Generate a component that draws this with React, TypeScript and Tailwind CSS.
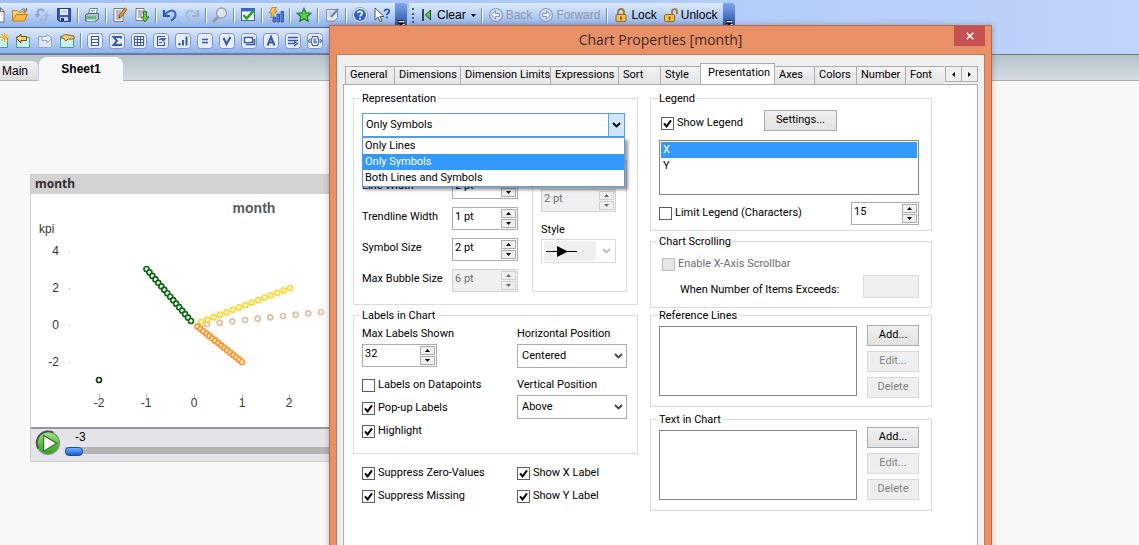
import { useState, type ReactNode } from "react";

/* ---------- toolbar icons (16 x 16) ---------- */

function Svg({ children }: { children: ReactNode }) {
  return (
    <svg viewBox="0 0 16 16" className="block size-4 shrink-0" aria-hidden="true">
      {children}
    </svg>
  );
}

const NewIcon = () => (
  <Svg>
    <path d="M4 1h8l3 3v11H4z" fill="#fff" stroke="#6b6f76" />
    <path d="M11.500 1v3.500H15" fill="#d9dde3" stroke="#6b6f76" />
  </Svg>
);
const OpenIcon = () => (
  <Svg>
    <path d="M.5 14V3.500h5L7 5h6v3" fill="#f3cf74" stroke="#b8862b" />
    <path d="M.5 14 4 7.500h11.500L12.500 14z" fill="#fbb648" stroke="#c07d1e" />
    <path d="M9 3.500c1-2 3.500-2 4.500-.5M14.500 1v3h-3" fill="none" stroke="#7a5a20" />
  </Svg>
);
const ReloadIcon = () => (
  <Svg>
    <path d="M3.500 9.500V6c0-4 5-5 6.500-1.500" fill="none" stroke="#8fa5c9" strokeWidth="2" />
    <path d="M.5 7h6l-3 4z" fill="#8fa5c9" />
    <path d="M12.500 7v3c0 4-5 5-6.500 1.500" fill="none" stroke="#a5b7d5" strokeWidth="2" />
    <path d="M9.500 9h6l-3-4z" fill="#a5b7d5" />
  </Svg>
);
const SaveIcon = () => (
  <Svg>
    <path d="M1.500 1.500h13v13h-11l-2-2z" fill="#3a57b5" stroke="#263b87" />
    <rect x="4" y="2" width="8" height="6" fill="#eef3fd" />
    <path d="M5 4h6M5 6h6" stroke="#a8b8de" />
    <rect x="4" y="10" width="8" height="4" fill="#c5cfe6" />
    <rect x="5" y="11" width="3" height="3" fill="#22357a" />
  </Svg>
);
const PrintIcon = () => (
  <Svg>
    <path d="M4.500 7 6 1.500h7.500L12 7z" fill="#fff" stroke="#6c8096" />
    <path d="M7 3.500h4M6.500 5h4" stroke="#8fa2b8" />
    <path d="M1.500 8 4 6.500h10.500V12l-2.500 2H1.500z" fill="#aebfd0" stroke="#53677d" />
    <path d="M2 10.500h10" stroke="#4bb56b" strokeWidth="2" />
    <path d="M3 13.500h8" stroke="#eef2f6" />
  </Svg>
);
const EditScriptIcon = () => (
  <Svg>
    <path d="M2 1.500h9v13H2z" fill="#fff" stroke="#747a84" />
    <path d="M4 4h5M4 6h5M4 8h4M4 10h3M4 12h5" stroke="#6f7783" />
    <path d="M14 1.500 7.500 10" stroke="#7a3f16" strokeWidth="3.200" />
    <path d="M14 1.500 7.800 9.600" stroke="#f0a43c" strokeWidth="1.800" />
    <path d="m6.500 11.500 .5-2 1.500 1z" fill="#222" />
  </Svg>
);
const ExportIcon = () => (
  <Svg>
    <path d="M2 1.500h8v12H2z" fill="#fff" stroke="#747a84" />
    <path d="M4 4h5M4 6h5M4 8h4M4 10h3" stroke="#6f7783" />
    <path d="M9.500 4.500h3V10h2.500l-4 5-4-5h2.500z" fill="#6cc24a" stroke="#2f7c22" />
  </Svg>
);
const UndoIcon = () => (
  <Svg>
    <path d="M2 3v6h6" fill="none" stroke="#2f56b5" strokeWidth="2.200" />
    <path d="M3 8C6 3 13 2 13.500 7c.2 3-1.500 5-4.500 6.500" fill="none" stroke="#3c67c6" strokeWidth="2.200" />
  </Svg>
);
const RedoIcon = () => (
  <Svg>
    <path d="M14 3v6H8" fill="none" stroke="#9aaecb" strokeWidth="2.200" />
    <path d="M13 8C10 3 3 2 2.500 7c-.2 3 1.500 5 4 6.500" fill="none" stroke="#a9bbd6" strokeWidth="2.200" />
  </Svg>
);
const SearchIcon = () => (
  <Svg>
    <path d="m6 10-5 5" stroke="#9d9696" strokeWidth="2.600" />
    <circle cx="9.500" cy="6" r="5" fill="#dbe4f3" stroke="#98a3b5" strokeWidth="1.400" />
    <path d="M6.800 5.500c.5-1.800 2-2.500 3.200-2.500" fill="none" stroke="#fff" />
  </Svg>
);
const SelectionsIcon = () => (
  <Svg>
    <rect x="1.500" y="1.500" width="13" height="12" fill="#fff" stroke="#4064b4" />
    <path d="M1 3h14" stroke="#3f66c4" strokeWidth="3" />
    <path d="m3.500 8 3 3.500 7-7.500" fill="none" stroke="#2ba32b" strokeWidth="2.600" />
  </Svg>
);
const QuickChartIcon = () => (
  <Svg>
    <path d="M5 10h2.500v5H5zM9 7h2.500v8H9zM13 4.500h2.500V15H13z" fill="#4a7fe0" stroke="#23499d" strokeWidth=".8" />
    <path d="M4 .5h4.500L6.500 4H9L2.500 11 4 6H1z" fill="#fbc63c" stroke="#b4761a" strokeWidth=".8" />
  </Svg>
);
const StarIcon = () => (
  <Svg>
    <path d="m8 1.500 2 4.300 4.800.5-3.500 3.200 1 4.700L8 11.900l-4.300 2.300 1-4.700L1.200 6.300 6 5.800z" fill="#59cf4b" stroke="#23802a" strokeWidth="1.200" />
  </Svg>
);
const NotesIcon = () => (
  <Svg>
    <path d="M2.500 2.500h11v8l-3 3.500h-8z" fill="#e3eaf6" stroke="#8592ab" />
    <path d="M4.500 5h5M4.500 7h4M4.500 9h2" stroke="#b1bccf" />
    <path d="m14 2-7 8" stroke="#7787a5" strokeWidth="2.400" />
  </Svg>
);
const HelpIcon = () => (
  <Svg>
    <circle cx="8" cy="8" r="7.500" fill="#f7faff" stroke="#7f93c0" strokeWidth=".8" />
    <circle cx="8" cy="8" r="6" fill="#2a5fd0" />
    <path d="M5.800 6.300C6 3.600 10.300 3.800 10.200 6.300 10.100 7.800 8 7.900 8 9.500M8 10.800v1.700" fill="none" stroke="#fff" strokeWidth="1.700" />
  </Svg>
);
const WhatsThisIcon = () => (
  <Svg>
    <path d="M1 1v12l3-3 2 4.500 2-1L6 9.500h4z" fill="#fff" stroke="#4b5666" />
    <path d="M10.500 4.500c.2-3 5-2.800 4.700 0C15 6.200 12.800 6.300 12.800 8M12.800 9.500v1.800" fill="none" stroke="#2a55b8" strokeWidth="1.800" />
  </Svg>
);

const SheetBase = ({ dim = false }: { dim?: boolean }) => (
  <path d="M1.500 3.500h5l1 1h7v10h-13z" fill={dim ? "#dbe4f3" : "#c9f0ea"} stroke={dim ? "#9aa7c0" : "#4b9c97"} />
);
const NewSheetIcon = () => (
  <Svg>
    <SheetBase />
    <path d="M11.500 0v9M7 4.500h9M8.300 1.300l6.400 6.400M14.700 1.300 8.300 7.700" stroke="#f2b61c" strokeWidth="1.200" />
  </Svg>
);
const PrevSheetIcon = () => (
  <Svg>
    <SheetBase />
    <path d="M6 1 1.500 5.500 6 10V7.500h5.500v-4H6z" fill="#fbd470" stroke="#6d4b10" />
  </Svg>
);
const NextSheetIcon = () => (
  <Svg>
    <SheetBase dim />
    <path d="m10 1 4.500 4.500L10 10V7.500H5v-4h5z" fill="#e9effa" stroke="#98a5c0" />
  </Svg>
);
const SheetPropsIcon = () => (
  <Svg>
    <SheetBase />
    <path d="M2 5c1-3 4-4 7-3l6 1v3H9L7 8 5 5.500z" fill="#f6ce66" stroke="#7d5a18" strokeWidth=".9" />
  </Svg>
);

function BoxIcon({ children }: { children: ReactNode }) {
  return (
    <Svg>
      <rect x=".5" y=".5" width="15" height="15" rx="3" fill="#e6edf9" stroke="#8194bb" />
      <g fill="none" stroke="#3b5cab" strokeWidth="1.200">
        {children}
      </g>
    </Svg>
  );
}
const objectTools: { name: string; art: ReactNode }[] = [
  { name: "List box", art: <path d="M4.500 3.500h7v9h-7zM4 6.500h8M4 9.500h8" fill="#fff" /> },
  { name: "Statistics box", art: <path d="M12 5.500V4H4.500L8 8l-3.500 4H12v-1.500" strokeWidth="2" /> },
  { name: "Table box", art: <path d="M3.500 3.500h9v9h-9zM3.500 6.500h9M3.500 9.500h9M6.500 3.500v9M9.500 3.500v9" fill="#fff" /> },
  {
    name: "Multi box",
    art: (
      <>
        <path d="M4.500 3v9.500h7V9M4 3.500h8M6 9.500h3M6 6.500h2" />
        <path d="M7 5h6.500l-3.200 4z" fill="#3b5cab" stroke="none" />
      </>
    ),
  },
  { name: "Chart", art: <path d="M4.500 12.500V10M8 12.500V7M11.500 12.500v-9" strokeWidth="2" /> },
  { name: "Input box", art: <path d="M5 6.500h6M5 9.500h6" strokeWidth="1.600" /> },
  { name: "Current selections", art: <path d="M4.500 5 7.500 11l4-7" strokeWidth="2.200" /> },
  { name: "Button", art: <path d="M3.500 4.500h8v5h-8zM5 11.500h8.500V6" strokeWidth="1.600" fill="#fff" /> },
  { name: "Text object", art: <path d="M4.500 12.500 8 4l3.500 8.500M6 9.500h4" strokeWidth="2" /> },
  { name: "Line or arrow", art: <path d="M3 4.500h10M3 7.500h10M3 10.500h7M9 8.500l3.500 2-3.500 2.500" strokeWidth="1.400" /> },
  {
    name: "Slider or calendar",
    art: (
      <>
        <path d="M5.500 3.500h5l1.500 4.500-1.500 4.500h-5L4 8zM3 6 1.500 8 3 10M13 6l1.500 2L13 10" fill="#fff" />
        <path d="M9.500 6H7v4h2.200V8H7" strokeWidth="1" />
      </>
    ),
  },
];

const ClearIcon = () => (
  <svg viewBox="0 0 10 12" className="h-3 w-2.5" aria-hidden="true">
    <path d="M1 0v12" stroke="#222" strokeWidth="1.600" />
    <path d="M8.500 1 3.500 6l5 5z" fill="#4fd254" stroke="#1b4a1f" />
  </svg>
);
const CircleArrow = ({ flip = false }: { flip?: boolean }) => (
  <Svg>
    <circle cx="8" cy="8" r="6.500" fill="#cfdcf3" stroke="#8c9dc4" strokeWidth="1.200" />
    <path d={flip ? "m8.500 3.800 4 4.200-4 4.200V9.500h-4v-3h4z" : "m7.500 3.800-4 4.200 4 4.200V9.500h4v-3h-4z"} fill="#eef3fc" stroke="#8395bd" />
  </Svg>
);
const LockIcon = ({ open = false }: { open?: boolean }) => (
  <Svg>
    <path
      d={open ? "M9 8V4.500c0-3.200 5-3.200 5 0V7" : "M5 8V5c0-4 6-4 6 0v3"}
      fill="none"
      stroke="#9a7b3a"
      strokeWidth="1.800"
    />
    <rect x={open ? 1.5 : 3} y="7.500" width="10" height="7" rx="1" fill="#f7bf4a" stroke="#94671a" />
    <path d={open ? "M6.500 9.500V13M5.500 10.500h2" : "M8 9.500V13M7 10.500h2"} stroke="#6a4510" strokeWidth="1.200" />
  </Svg>
);

/* ---------- toolbars ---------- */

function ToolButton({ name, children, first }: { name: string; children: ReactNode; first?: "narrow" | "wide" }) {
  const width = first === "narrow" ? "w-[9px]" : first === "wide" ? "w-3" : "w-[22px]";
  const align = first ? "justify-end" : "justify-center";
  const pad = first === "narrow" ? "pr-1" : first === "wide" ? "pr-[3px]" : "";
  return (
    <button type="button" aria-label={name} className={`flex h-full shrink-0 items-center overflow-hidden ${width} ${align} ${pad}`}>
      {children}
    </button>
  );
}

function Sep() {
  return (
    <span className="flex w-1.5 shrink-0 justify-center">
      <span className="h-[15px] w-0.5 border-l border-[#6a8ccb] bg-white" />
    </span>
  );
}

function OverflowButton() {
  return (
    <button
      type="button"
      aria-label="Toolbar options"
      className="flex h-full w-3 shrink-0 items-end justify-center rounded-tr-sm bg-linear-to-b from-[#7ea6ec] to-[#1f479f]"
    >
      <svg viewBox="0 0 8 8" className="size-2" aria-hidden="true">
        <path d="M1 .5h5" stroke="#000" />
        <path d="M2 1.500h5" stroke="#fff" />
        <path d="M2 4h6L5 7z" fill="#fff" />
        <path d="M1 3h6L4 6z" fill="#000" />
      </svg>
    </button>
  );
}

function TextTool({ icon, label, disabled }: { icon: ReactNode; label: string; disabled?: boolean }) {
  return (
    <button type="button" disabled={disabled} className="flex items-center gap-0.5 disabled:text-[#8f98ab]">
      {icon}
      {label}
    </button>
  );
}

function Toolbars() {
  return (
    <div className="bg-linear-to-r from-[#9fbff5] to-[#bfd4fb] pt-[3px] text-xs text-black">
      <div className="flex h-[25px]">
        <div className="flex items-center border-b border-[#3f67b5] bg-linear-to-b from-[#dfebfe] to-[#8fb2ea] pr-0.5">
          <ToolButton name="New" first="narrow"><NewIcon /></ToolButton>
          <ToolButton name="Open"><OpenIcon /></ToolButton>
          <ToolButton name="Refresh"><ReloadIcon /></ToolButton>
          <ToolButton name="Save"><SaveIcon /></ToolButton>
          <Sep />
          <ToolButton name="Print"><PrintIcon /></ToolButton>
          <Sep />
          <ToolButton name="Edit script"><EditScriptIcon /></ToolButton>
          <ToolButton name="Reload"><ExportIcon /></ToolButton>
          <Sep />
          <ToolButton name="Undo"><UndoIcon /></ToolButton>
          <ToolButton name="Redo"><RedoIcon /></ToolButton>
          <Sep />
          <ToolButton name="Search"><SearchIcon /></ToolButton>
          <Sep />
          <ToolButton name="Current selections"><SelectionsIcon /></ToolButton>
          <Sep />
          <ToolButton name="Quick chart"><QuickChartIcon /></ToolButton>
          <Sep />
          <ToolButton name="Add bookmark"><StarIcon /></ToolButton>
          <Sep />
          <ToolButton name="Notes"><NotesIcon /></ToolButton>
          <Sep />
          <ToolButton name="Help"><HelpIcon /></ToolButton>
          <ToolButton name="What is this"><WhatsThisIcon /></ToolButton>
        </div>
        <OverflowButton />
        <div className="ml-0.5 flex items-center border-b border-[#3f67b5] bg-linear-to-b from-[#dfebfe] to-[#8fb2ea] pr-1.5 pl-[3px]">
          <span className="mr-2 h-[15px] w-0.5 border-l-2 border-dotted border-[#3b5ca6]" />
          <button type="button" className="mr-[3px] flex items-center gap-[5px]">
            <ClearIcon />
            Clear
            <svg viewBox="0 0 5 3" className="h-[3px] w-[5px]" aria-hidden="true">
              <path d="M0 0h5L2.500 3z" fill="#000" />
            </svg>
          </button>
          <Sep />
          <span className="flex items-center gap-1.5 pr-1 pl-[3px]">
            <TextTool icon={<CircleArrow />} label="Back" disabled />
            <TextTool icon={<CircleArrow flip />} label="Forward" disabled />
          </span>
          <Sep />
          <span className="flex items-center gap-1.5 pl-[3px]">
            <TextTool icon={<LockIcon />} label="Lock" />
            <TextTool icon={<LockIcon open />} label="Unlock" />
          </span>
        </div>
        <OverflowButton />
      </div>
      <div className="flex h-[26px]">
        <div className="flex w-[420px] items-center border-b border-[#5a82c8] bg-linear-to-b from-[#dfebfe] to-[#8fb2ea]">
          <ToolButton name="Add sheet" first="wide"><NewSheetIcon /></ToolButton>
          <ToolButton name="Promote sheet"><PrevSheetIcon /></ToolButton>
          <ToolButton name="Demote sheet"><NextSheetIcon /></ToolButton>
          <ToolButton name="Sheet properties"><SheetPropsIcon /></ToolButton>
          <Sep />
          {objectTools.map((tool) => (
            <ToolButton key={tool.name} name={tool.name}>
              <BoxIcon>{tool.art}</BoxIcon>
            </ToolButton>
          ))}
        </div>
      </div>
    </div>
  );
}

function SheetTabs() {
  return (
    <div className="flex h-[27px] items-end border-t border-[#77797c] bg-linear-to-b from-[#b3c2c9] to-[#d6dfe5] text-xs text-black">
      <button type="button" className="mr-px flex h-5 items-center rounded-tr-md border-b border-[#b5b9bc] bg-linear-to-b from-[#f2f2f2] to-[#dedede] pr-2.5 pl-0.5">
        Main
      </button>
      <button type="button" className="flex h-6 w-[84px] items-center justify-center rounded-t-lg bg-[#f8f8f8] font-bold">
        Sheet1
      </button>
      <span className="h-px grow bg-[#a9adb0]" />
    </div>
  );
}

/* ---------- chart ---------- */

type Point = [number, number];

function line(from: Point, to: Point, count: number): Point[] {
  return Array.from({ length: count }, (_, i) => [
    from[0] + ((to[0] - from[0]) * i) / (count - 1),
    from[1] + ((to[1] - from[1]) * i) / (count - 1),
  ]);
}

const series: { color: string; points: Point[] }[] = [
  { color: "#e3bda4", points: line([176, 130], [290, 118], 10) },
  { color: "#fdd835", points: line([170, 128], [259, 94], 15) },
  { color: "#0f6a14", points: line([115.5, 75], [160, 127], 16) },
  { color: "#ff9326", points: line([166.5, 132.5], [211, 168], 16) },
  { color: "#0f3d12", points: [[68, 186]] },
];
const yTicks: [string, number][] = [["4", 57], ["2", 94], ["0", 131], ["-2", 168]];
const xTicks: [string, number][] = [["-2", 68], ["-1", 115], ["0", 163], ["1", 211], ["2", 258]];

function ChartObject() {
  return (
    <section className="w-[440px] border border-[#cdcdcd] bg-white">
      <h2 className="h-[19px] bg-[#d2d2d2] pl-1 font-['Noto_Sans'] text-xs leading-[17px] font-bold text-[#2f2f2f]">month</h2>
      <svg viewBox="0 0 438 233" className="block h-[233px] w-[438px]" role="img" aria-label="month scatter chart">
        <text x="223" y="19" textAnchor="middle" fontSize="14" fontWeight="700" fill="#5a5a5a">month</text>
        <text x="8" y="39" fontSize="12" fill="#333">kpi</text>
        {yTicks.map(([label, y]) => (
          <g key={label}>
            <text x="28" y={y + 4} textAnchor="end" fontSize="12" fill="#333">{label}</text>
            <path d={`M38 ${y + 0.5}h1`} stroke="#b0b0b0" />
          </g>
        ))}
        {xTicks.map(([label, x]) => (
          <g key={label}>
            <path d={`M${x + 0.5} 200v4`} stroke="#bdbdbd" />
            <text x={x} y="213" textAnchor="middle" fontSize="12" fill="#333">{label}</text>
          </g>
        ))}
        {series.map((s) => (
          <g key={s.color} fill="#fff" stroke={s.color} strokeWidth="1.700">
            {s.points.map(([x, y]) => (
              <circle key={`${x}-${y}`} cx={x} cy={y} r="2.500" />
            ))}
          </g>
        ))}
      </svg>
      <div className="flex h-[34px] items-start gap-1 border-t-2 border-[#98989a] bg-[#e5e4e8] pl-1">
        <button type="button" aria-label="Play" className="mt-px size-[26px] shrink-0">
          <svg viewBox="0 0 24 24" className="size-[26px]" aria-hidden="true">
            <defs>
              <linearGradient id="play" x1="0" y1="0" x2="0" y2="1">
                <stop offset="0" stopColor="#a5e58a" />
                <stop offset=".5" stopColor="#5fc242" />
                <stop offset="1" stopColor="#2aa31c" />
              </linearGradient>
            </defs>
            <circle cx="12" cy="12" r="10.500" fill="url(#play)" stroke="#8b968a" strokeWidth="1.200" />
            <path d="M3 17A10.500 10.500 0 0 1 17 2.500" fill="none" stroke="#4d504d" strokeWidth="1.800" />
            <path d="M8 5v14.500l12-7.200z" fill="#fff" stroke="#2c6b22" />
          </svg>
        </button>
        <label className="flex grow flex-col pt-px text-xs leading-[14px] text-black">
          <span className="pl-2.5">-3</span>
          <input
            type="range"
            min={-3}
            max={3}
            defaultValue={-3}
            className="h-3 w-full appearance-none bg-transparent [&::-webkit-slider-runnable-track]:flex [&::-webkit-slider-runnable-track]:h-[7px] [&::-webkit-slider-runnable-track]:items-center [&::-webkit-slider-runnable-track]:bg-[#b5b5b5] [&::-webkit-slider-thumb]:h-[9px] [&::-webkit-slider-thumb]:w-[18px] [&::-webkit-slider-thumb]:appearance-none [&::-webkit-slider-thumb]:rounded-[4px] [&::-webkit-slider-thumb]:border [&::-webkit-slider-thumb]:border-[#1b4fae] [&::-webkit-slider-thumb]:bg-linear-to-b [&::-webkit-slider-thumb]:from-[#6fb0f8] [&::-webkit-slider-thumb]:to-[#1860d0]"
          />
        </label>
      </div>
    </section>
  );
}

/* ---------- dialog controls ---------- */

function Check({ label, checked = false, disabled }: { label: string; checked?: boolean; disabled?: boolean }) {
  return (
    <label className={`flex items-center gap-[3px] ${disabled ? "text-[#6d6d6d]" : ""}`}>
      <span className="grid">
        <input
          type="checkbox"
          defaultChecked={checked}
          disabled={disabled}
          className="peer col-start-1 row-start-1 size-[13px] appearance-none border border-[#5f5f5f] bg-white disabled:border-[#bcbcbc] disabled:bg-[#e6e6e6]"
        />
        <svg viewBox="0 0 13 13" className="pointer-events-none invisible col-start-1 row-start-1 size-[13px] peer-checked:visible" aria-hidden="true">
          <path d="m3 6.300 2.600 3L10 3.300" fill="none" stroke="#000" strokeWidth="2" />
        </svg>
      </span>
      {label}
    </label>
  );
}

function Spinner({ name, value, width, disabled }: { name: string; value: string; width: string; disabled?: boolean }) {
  const step = disabled
    ? "flex h-[9px] w-[15px] items-center justify-center border border-[#d0d0d0] bg-[#efefef]"
    : "flex h-[9px] w-[15px] items-center justify-center border border-[#acacac] bg-[#efefef]";
  const fill = disabled ? "#6d6d6d" : "#000";
  return (
    <span className={`flex h-[23px] shrink-0 items-start border p-px ${width} ${disabled ? "border-[#d0d0d0] bg-[#f0f0f0]" : "border-[#acacac] bg-white"}`}>
      <input aria-label={name} defaultValue={value} disabled={disabled} className="h-4 w-0 grow bg-transparent pl-px disabled:text-[#6d6d6d]" />
      <span className="flex flex-col gap-px">
        <button type="button" aria-label={`${name} up`} disabled={disabled} className={step}>
          <svg viewBox="0 0 5 3" className="h-[3px] w-[5px]" aria-hidden="true"><path d="M0 3h5L2.500 0z" fill={fill} /></svg>
        </button>
        <button type="button" aria-label={`${name} down`} disabled={disabled} className={step}>
          <svg viewBox="0 0 5 3" className="h-[3px] w-[5px]" aria-hidden="true"><path d="M0 0h5L2.500 3z" fill={fill} /></svg>
        </button>
      </span>
    </span>
  );
}

function Chevron({ color }: { color: string }) {
  return (
    <svg viewBox="0 0 9 6" className="h-1.5 w-[9px]" aria-hidden="true">
      <path d="m1 1 3.500 3.500L8 1" fill="none" stroke={color} strokeWidth="1.800" />
    </svg>
  );
}

function Combo({ label, options }: { label: string; options: string[] }) {
  return (
    <label className="flex flex-col gap-0.5">
      <span className="leading-4">{label}</span>
      <span className="grid h-6">
        <select className="col-start-1 row-start-1 appearance-none border border-[#acacac] bg-white pl-1">
          {options.map((o) => (
            <option key={o}>{o}</option>
          ))}
        </select>
        <span className="pointer-events-none col-start-1 row-start-1 self-center justify-self-end pr-1">
          <Chevron color="#444" />
        </span>
      </span>
    </label>
  );
}

function Push({ children, disabled, wide }: { children: string; disabled?: boolean; wide?: boolean }) {
  return (
    <button
      type="button"
      disabled={disabled}
      className={`h-[21px] shrink-0 border border-[#acacac] bg-linear-to-b from-[#f0f0f0] to-[#e3e3e3] disabled:border-[#d9d9d9] disabled:from-[#efefef] disabled:to-[#efefef] disabled:text-[#838383] ${wide ? "w-[73px]" : "w-[52px]"}`}
    >
      {children}
    </button>
  );
}

function Group({ title, children, className = "" }: { title: string; children: ReactNode; className?: string }) {
  return (
    <fieldset className={`min-w-0 border border-[#dcdcdc] pl-1.5 ${className}`}>
      <legend className="px-0.5 leading-[15px]">{title}</legend>
      <div className="pl-0.5">{children}</div>
    </fieldset>
  );
}

const representations = ["Only Lines", "Only Symbols", "Both Lines and Symbols"];

function RepresentationGroup() {
  const [mode, setMode] = useState("Only Symbols");
  return (
    <Group title="Representation" className="pr-2.5 pb-3">
      <div className="relative mt-[7px] mr-0.5">
        <div className="grid h-6">
          <select
            aria-label="Representation"
            value={mode}
            onChange={(e) => setMode(e.target.value)}
            className="col-start-1 row-start-1 appearance-none border border-[#569de5] bg-white pl-[3px]"
          >
            {representations.map((r) => (
              <option key={r}>{r}</option>
            ))}
          </select>
          <span className="pointer-events-none col-start-1 row-start-1 flex w-[17px] items-center justify-center justify-self-end border border-[#569de5] bg-[#cfe5fc]">
            <Chevron color="#000" />
          </span>
        </div>
        <ul role="listbox" aria-label="Representation options" className="absolute top-full right-0 left-0 border border-[#569de5] bg-white shadow-[3px_3px_3px_rgba(0,0,0,0.4)]">
          {representations.map((r) => (
            <li
              key={r}
              role="option"
              aria-selected={r === mode}
              onClick={() => setMode(r)}
              className={`h-4 pl-0.5 leading-4 ${r === mode ? "bg-[#3399ff] text-white" : ""}`}
            >
              {r}
            </li>
          ))}
        </ul>
      </div>
      <div className="mt-[23px] flex gap-3.5">
        <div className="mt-4 flex grow flex-col gap-2">
          <SizeRow label="Line Width" value="2 pt" />
          <SizeRow label="Trendline Width" value="1 pt" />
          <SizeRow label="Symbol Size" value="2 pt" />
          <SizeRow label="Max Bubble Size" value="6 pt" disabled />
        </div>
        <div className="flex w-[95px] flex-col border border-[#dcdcdc] px-2 pt-7">
          <Spinner name="Arrow size" value="2 pt" width="w-[75px]" disabled />
          <span className="mt-2.5 leading-4">Style</span>
          <button type="button" disabled aria-label="Style" className="mt-px flex h-6 w-[75px] items-center justify-between border border-[#d9d9d9] bg-white pr-1 pl-0.5">
            <svg viewBox="0 0 52 20" className="h-5 w-[52px] bg-[#f0f0f0]" aria-hidden="true">
              <path d="M2 10.500h31" stroke="#000" />
              <path d="M13 5v11l11-5.500z" fill="#000" />
            </svg>
            <Chevron color="#bcbcbc" />
          </button>
        </div>
      </div>
    </Group>
  );
}

function SizeRow({ label, value, disabled }: { label: string; value: string; disabled?: boolean }) {
  return (
    <div className="flex justify-between">
      <span className="leading-5">{label}</span>
      <Spinner name={label} value={value} width="w-[66px]" disabled={disabled} />
    </div>
  );
}

function LabelsGroup() {
  return (
    <Group title="Labels in Chart" className="mt-[3px] pr-2.5 pb-3.5">
      <div className="mt-[3px] flex justify-between">
        <div className="flex flex-col">
          <span className="mb-0.5 leading-4">Max Labels Shown</span>
          <Spinner name="Max Labels Shown" value="32" width="w-[75px]" />
          <div className="mt-2.5 flex flex-col gap-[7px] leading-4">
            <Check label="Labels on Datapoints" />
            <Check label="Pop-up Labels" checked />
            <Check label="Highlight" checked />
          </div>
        </div>
        <div className="flex w-[110px] flex-col gap-[9px]">
          <Combo label="Horizontal Position" options={["Centered", "Left", "Right"]} />
          <Combo label="Vertical Position" options={["Above", "Centered", "Below"]} />
        </div>
      </div>
    </Group>
  );
}

function LegendGroup() {
  return (
    <Group title="Legend" className="pr-3 pb-[5px]">
      <div className="mt-1 flex items-end pl-0.5">
        <div className="w-[103px] leading-4">
          <Check label="Show Legend" checked />
        </div>
        <Push wide>Settings...</Push>
      </div>
      <ul role="listbox" aria-label="Legend dimensions" className="mt-[9px] h-[55px] border border-[#828790] bg-white p-px">
        <li role="option" aria-selected="true" className="h-4 bg-[#3399ff] pl-0.5 leading-4 text-white">X</li>
        <li role="option" aria-selected="false" className="h-4 pl-0.5 leading-4">Y</li>
      </ul>
      <div className="mt-[7px] flex items-center justify-between">
        <Check label="Limit Legend (Characters)" />
        <Spinner name="Legend characters" value="15" width="w-[68px]" />
      </div>
    </Group>
  );
}

function ScrollingGroup() {
  return (
    <Group title="Chart Scrolling" className="mt-[3px] pr-3 pb-[9px]">
      <div className="mt-[7px] pl-[3px] leading-4">
        <Check label="Enable X-Axis Scrollbar" disabled />
      </div>
      <label className="mt-[3px] flex items-center justify-between pl-[21px]">
        <span className="mt-[7px] leading-4">When Number of Items Exceeds:</span>
        <input disabled className="h-[23px] w-14 border border-[#d9d9d9] bg-[#f0f0f0]" />
      </label>
    </Group>
  );
}

function ListGroup({ title, raised = false }: { title: string; raised?: boolean }) {
  return (
    <Group title={title} className={`pr-3 ${raised ? "mt-[5px] pb-2.5" : "pb-2"}`}>
      <div className={`flex gap-2.5 ${raised ? "" : "mt-0.5"}`}>
        <ul role="listbox" aria-label={title} className={`h-[70px] grow border border-[#828790] bg-white ${raised ? "mt-[3px]" : "mt-px"}`} />
        <div className="flex flex-col gap-[5px]">
          <Push>Add...</Push>
          <Push disabled>Edit...</Push>
          <Push disabled>Delete</Push>
        </div>
      </div>
    </Group>
  );
}

/* ---------- dialog ---------- */

const tabs: { name: string; width: string }[] = [
  { name: "General", width: "w-[50px]" },
  { name: "Dimensions", width: "w-[67px]" },
  { name: "Dimension Limits", width: "w-[91px]" },
  { name: "Expressions", width: "w-[69px]" },
  { name: "Sort", width: "w-[43px]" },
  { name: "Style", width: "w-[41px]" },
  { name: "Presentation", width: "w-[75px]" },
  { name: "Axes", width: "w-[41px]" },
  { name: "Colors", width: "w-[43px]" },
  { name: "Number", width: "w-[50px]" },
  { name: "Font", width: "w-[39px]" },
];

function TabStrip() {
  return (
    <div className="flex items-end pl-0.5">
      <div role="tablist" className="flex items-end">
        {tabs.map((tab) =>
          tab.name === "Presentation" ? (
            <button key={tab.name} type="button" role="tab" aria-selected="true" className={`-mb-px -ml-px flex h-[22px] shrink-0 items-center border border-b-0 border-[#acacac] bg-white pb-0.5 pl-[7px] ${tab.width}`}>
              {tab.name}
            </button>
          ) : (
            <button key={tab.name} type="button" role="tab" aria-selected="false" className={`-ml-px flex h-[18px] shrink-0 items-center border border-b-0 border-[#acacac] bg-linear-to-b from-[#f2f2f2] to-[#e5e5e5] pl-1 first:ml-0 last:border-r-0 ${tab.width}`}>
              {tab.name}
            </button>
          ),
        )}
      </div>
      <div className="mb-0.5 ml-px flex">
        <button type="button" aria-label="Scroll tabs left" className="flex h-4 w-[17px] items-center justify-center border border-[#acacac] bg-[#f0f0f0]">
          <svg viewBox="0 0 3 5" className="h-[5px] w-[3px]" aria-hidden="true"><path d="M3 0v5L0 2.500z" /></svg>
        </button>
        <button type="button" aria-label="Scroll tabs right" className="-ml-px flex h-4 w-[17px] items-center justify-center border border-[#acacac] bg-[#f0f0f0]">
          <svg viewBox="0 0 3 5" className="h-[5px] w-[3px]" aria-hidden="true"><path d="M0 0v5l3-2.500z" /></svg>
        </button>
      </div>
    </div>
  );
}

function ChartPropertiesDialog() {
  return (
    <div
      role="dialog"
      aria-label="Chart Properties [month]"
      className="absolute top-[25px] -bottom-4 left-[329px] flex w-[663px] flex-col border border-[#b8694a] bg-[#e99067] px-1.5 pb-1.5 shadow-[0_0_6px_rgba(0,0,0,0.25)]"
    >
      <header className="grid h-7 grid-cols-[1fr_auto_1fr]">
        <h1 className="col-start-2 self-center font-['Open_Sans'] text-sm leading-4 text-[#3a2a24]">Chart Properties [month]</h1>
        <button type="button" aria-label="Close" className="flex h-5 w-[31px] items-center justify-center justify-self-end bg-[#c75050]">
          <svg viewBox="0 0 8 8" className="size-2" aria-hidden="true">
            <path d="m.7.7 6.600 6.600M7.300.7.7 7.300" stroke="#fff" strokeWidth="1.600" />
          </svg>
        </button>
      </header>
      <div className="flex grow flex-col border border-[#c67a52] bg-[#f0f0f0] px-1.5 pt-2 font-[Roboto,'Liberation_Sans',sans-serif] text-[11px] whitespace-nowrap text-black">
        <TabStrip />
        <div role="tabpanel" className="flex grow items-start gap-3 border border-[#acacac] bg-white px-[9px] pt-1.5">
          <div className="w-[285px]">
            <RepresentationGroup />
            <LabelsGroup />
            <div className="mt-[11px] grid grid-cols-[155px_1fr] gap-y-[7px] pl-[9px] leading-4">
              <Check label="Suppress Zero-Values" checked />
              <Check label="Show X Label" checked />
              <Check label="Suppress Missing" checked />
              <Check label="Show Y Label" checked />
            </div>
          </div>
          <div className="w-[282px]">
            <LegendGroup />
            <ScrollingGroup />
            <ListGroup title="Reference Lines" />
            <ListGroup title="Text in Chart" raised />
          </div>
        </div>
      </div>
    </div>
  );
}

export default function App() {
  return (
    <div className="relative min-h-screen overflow-hidden bg-[#f8f8f8] font-['Liberation_Sans',Arial,sans-serif]">
      <Toolbars />
      <SheetTabs />
      <main className="pt-[93px] pl-[30px]">
        <ChartObject />
      </main>
      <ChartPropertiesDialog />
    </div>
  );
}
